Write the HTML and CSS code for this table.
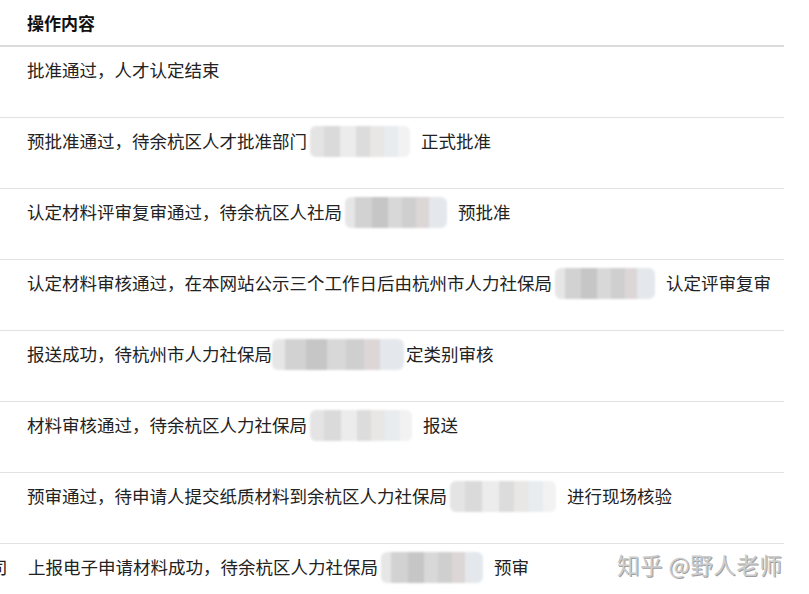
FILE: index.html
```html
<!DOCTYPE html>
<html lang="zh-CN">
<head>
<meta charset="utf-8">
<title>操作内容</title>
<link rel="stylesheet" href="styles.css">
</head>
<body>
<div class="page">
  <div class="table">
    <div class="head">操作内容</div>
    <div class="row">批准通过，人才认定结束</div>
    <div class="row">预批准通过，待余杭区人才批准部门<span class="mask m-light w100"></span><span class="after">正式批准</span></div>
    <div class="row">认定材料评审复审通过，待余杭区人社局<span class="mask m-mid w102"></span><span class="after">预批准</span></div>
    <div class="row">认定材料审核通过，在本网站公示三个工作日后由杭州市人力社保局<span class="mask m-mid w100"></span><span class="after">认定评审复审</span></div>
    <div class="row">报送成功，待杭州市人力社保局<span class="mask m-mid w132 tight"></span>定类别审核</div>
    <div class="row">材料审核通过，待余杭区人力社保局<span class="mask m-light w102"></span><span class="after">报送</span></div>
    <div class="row">预审通过，待申请人提交纸质材料到余杭区人力社保局<span class="mask m-light w106"></span><span class="after">进行现场核验</span></div>
    <div class="row"><span class="cut">司</span>上报电子申请材料成功，待余杭区人力社保局<span class="mask m-mid w102"></span><span class="after">预审</span></div>
  </div>
  <div class="watermark">知乎 @野人老师</div>
</div>
</body>
</html>
```
FILE: styles.css
```css
html, body {
  margin: 0;
  padding: 0;
  background: #ffffff;
  overflow: hidden;
}
body {
  width: 809px;
  height: 594px;
  font-family: "Noto Sans CJK SC", "Noto Sans", sans-serif;
  color: #222222;
}
.page {
  position: relative;
  width: 809px;
  height: 594px;
  overflow: hidden;
}
.table {
  width: 784px;
}
.head {
  height: 45px;
  line-height: 45px;
  padding-left: 27px;
  font-size: 17px;
  font-weight: 700;
  color: #111111;
  border-bottom: 2px solid #dcdcdc;
}
.row {
  height: 59px;
  padding-top: 11px;
  padding-left: 27px;
  line-height: 24px;
  font-size: 17.5px;
  border-bottom: 1px solid #e2e2e2;
  white-space: nowrap;
}
.mask {
  display: inline-block;
  height: 31px;
  vertical-align: middle;
  margin: -4px 11px 0 3px;
  border-radius: 6px;
  filter: blur(1.2px);
}
.mask.tight {
  margin-right: 2px;
  margin-left: 0;
}
.m-light {
  background:
    linear-gradient(90deg,
      #e4e4e4 0 14%, #dadada 14% 30%, #ececec 30% 46%,
      #dcdcdc 46% 60%, #e9e6e6 60% 74%, #e8ecef 74% 88%, #f2f2f2 88% 100%);
}
.m-mid {
  background:
    linear-gradient(90deg,
      #e6e6e6 0 10%, #d2d2d2 10% 26%, #c6c6c6 26% 42%,
      #d8d8d8 42% 56%, #cfcfcf 56% 70%, #dcd6d6 70% 82%, #e4e8ec 82% 100%);
}
.w100 { width: 100px; }
.w102 { width: 102px; }
.w106 { width: 106px; }
.w132 { width: 132px; }
.after {
  display: inline;
}
.cut {
  display: inline-block;
  margin-left: -37px;
  width: 38px;
  text-align: left;
}
.watermark {
  position: absolute;
  left: 617px;
  top: 548px;
  font-size: 22.5px;
  line-height: 32px;
  color: #cccccc;
  text-shadow: 1px 1px 0 #a0a0a0;
  letter-spacing: 0.5px;
}
```
